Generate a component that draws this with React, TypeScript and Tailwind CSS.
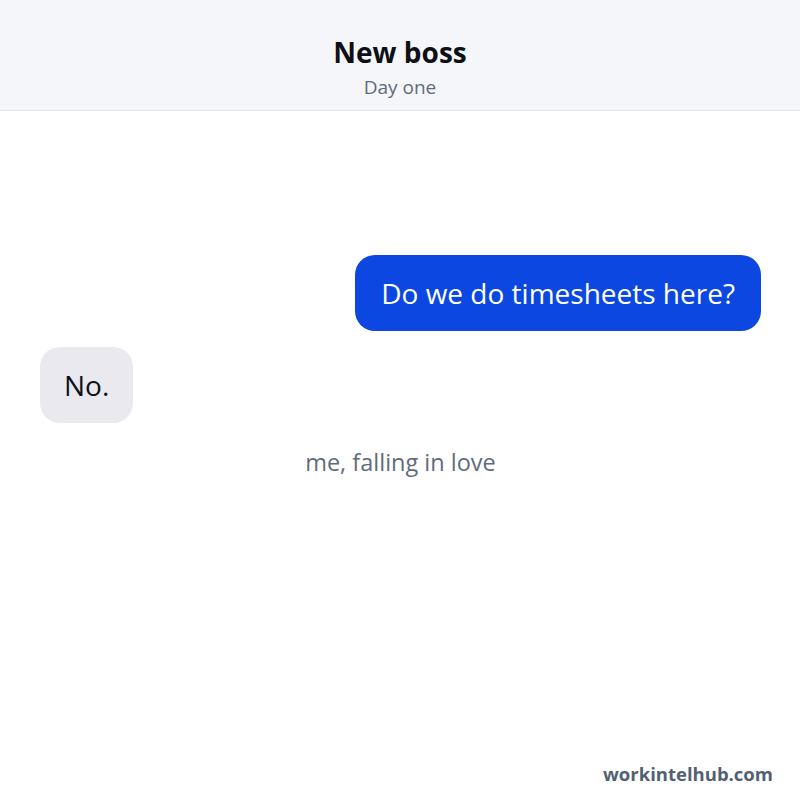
import React from "react";

const font = { fontFamily: '"Open Sans", "Noto Sans", sans-serif' };

export default function App() {
  return (
    <div className="relative w-[800px] h-[800px] bg-white overflow-hidden" style={font}>
      <header className="h-[111px] bg-[#f5f6fa] border-b border-[#e3e5ea] flex flex-col items-center pt-[32px]">
        <h1 className="text-[28px] leading-[40px] font-bold text-[#0d1117]">New boss</h1>
        <span className="text-[19px] leading-[26px] text-[#5f6b7d] mt-[2px]">Day one</span>
      </header>

      <div className="pl-[40px] pr-[39px] pt-[144px] flex flex-col">
        <div className="self-end bg-[#0b47e0] text-white text-[28px] leading-[36px] px-[26px] py-[20px] rounded-[20px]">
          Do we do timesheets here?
        </div>
        <div className="self-start mt-[16px] bg-[#e9e9ef] text-[#0d1117] text-[28px] leading-[36px] px-[24px] py-[20px] rounded-[20px]">
          No.
        </div>
        <p className="mt-[23px] text-center text-[23.5px] leading-[32px] text-[#5f6b7d]">
          me, falling in love
        </p>
      </div>

      <div className="absolute right-[27px] bottom-[12px] text-[18.5px] font-bold text-[#535f72]">
        workintelhub.com
      </div>
    </div>
  );
}
